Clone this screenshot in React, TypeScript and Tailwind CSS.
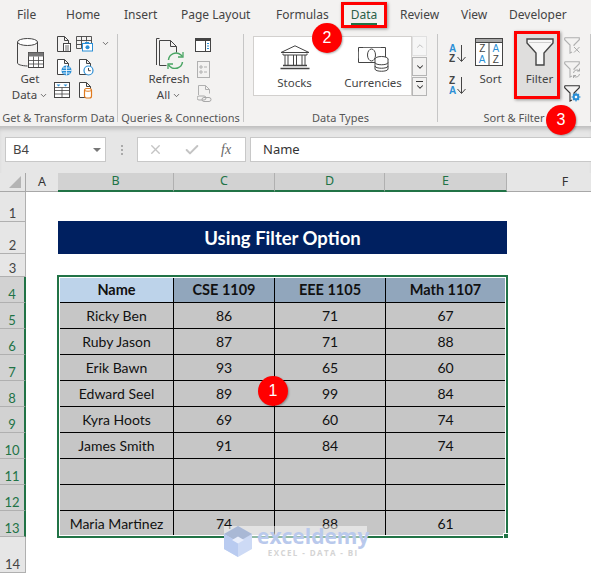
import { Check, ChevronDown, ChevronUp, X } from "lucide-react";

const tabs = [
  { t: "File", w: "w-[49px]" },
  { t: "Home", w: "w-[58px]" },
  { t: "Insert", w: "w-[57px]" },
  { t: "Page Layout", w: "w-[95px]" },
  { t: "Formulas", w: "w-[65px]" },
  { t: "Data", w: "" },
  { t: "Review", w: "w-[61px]" },
  { t: "View", w: "w-[48px]" },
  { t: "Developer", w: "w-[70px]" },
];

const rows = [
  ["Ricky Ben", "86", "71", "67"],
  ["Ruby Jason", "87", "71", "88"],
  ["Erik Bawn", "93", "65", "60"],
  ["Edward Seel", "89", "99", "84"],
  ["Kyra Hoots", "69", "60", "74"],
  ["James Smith", "91", "84", "74"],
  ["", "", "", ""],
  ["", "", "", ""],
  ["Maria Martinez", "74", "88", "61"],
];

const rowHeads = [
  { n: 1, h: "h-[30px]" },
  { n: 2, h: "h-[32px]" },
  { n: 3, h: "h-[23px]" },
  { n: 4, h: "h-[26px]", on: true },
  { n: 5, h: "h-[26px]", on: true },
  { n: 6, h: "h-[26px]", on: true },
  { n: 7, h: "h-[26px]", on: true },
  { n: 8, h: "h-[26px]", on: true },
  { n: 9, h: "h-[26px]", on: true },
  { n: 10, h: "h-[26px]", on: true },
  { n: 11, h: "h-[26px]", on: true },
  { n: 12, h: "h-[26px]", on: true },
  { n: 13, h: "h-[26px]", on: true },
  { n: 14, h: "h-[36px]" },
];

const colHeads = [
  { l: "A", w: "w-[32px]" },
  { l: "B", w: "w-[116px]", on: true },
  { l: "C", w: "w-[101px]", on: true },
  { l: "D", w: "w-[110px]", on: true },
  { l: "E", w: "w-[122px]", on: true },
  { l: "F", w: "w-[116px]" },
];

const cellW = ["w-[114px]", "w-[101px]", "w-[111px]", "w-[119px]"];

const ink = "#444";
const blue = "#2b8fd6";

function DocBase({ stroke = ink }: { stroke?: string }) {
  return <path d="M1.5.5h7l4 4v11h-11zM8.5.5v4h4" fill="#fff" stroke={stroke} />;
}

function GetDataIcon() {
  return (
    <svg width="28" height="31" viewBox="0 0 28 31" fill="none">
      <ellipse cx="10.5" cy="4" rx="10" ry="3.5" fill="#fff" stroke={ink} />
      <path d="M.5 4v21c0 1.5 4 2.8 10 3M20.5 4v10" stroke={ink} />
      <rect x="11.5" y="14.5" width="15" height="15" fill="#fff" stroke={ink} />
      <rect x="11.5" y="14.5" width="15" height="4" fill="#777" />
      <path d="M11.5 22.5h15M11.5 26h15M16.5 18.5v11M21.5 18.5v11" stroke={ink} strokeWidth=".8" />
    </svg>
  );
}

function DocLines() {
  return (
    <svg width="16" height="17" viewBox="0 0 16 17" fill="none">
      <path d="M1.5.5h7l4 4v11h-11zM8.5.5v4h4" stroke={ink} />
      <rect x="7.5" y="7.5" width="7" height="8" fill="#fff" stroke={ink} />
      <path d="M9 10h4M9 12h4M9 14h4" stroke={ink} strokeWidth=".8" />
    </svg>
  );
}

function CameraTable() {
  return (
    <svg width="17" height="16" viewBox="0 0 17 16" fill="none">
      <path d="M.5.5h15v9M.5.5v12h5M.5 4.5h15M.5 8.5h6M5.5.5v12M10.5.5v5" stroke={ink} strokeWidth=".9" />
      <rect x="6.5" y="7.5" width="10" height="7.5" fill="#fff" stroke={blue} />
      <rect x="9" y="6" width="4" height="2" fill={blue} />
      <circle cx="11.5" cy="11.2" r="2" fill={blue} />
    </svg>
  );
}

function DocGlobe() {
  return (
    <svg width="16" height="17" viewBox="0 0 16 17" fill="none">
      <DocBase />
      <circle cx="10.5" cy="11.5" r="5" fill={blue} />
      <path d="M5.5 11.5h10M10.5 6.5v10M7 9h7M7 14h7" stroke="#fff" strokeWidth=".8" />
    </svg>
  );
}

function DocClock() {
  return (
    <svg width="16" height="17" viewBox="0 0 16 17" fill="none">
      <DocBase />
      <circle cx="10.5" cy="11.5" r="4.5" fill="#fff" stroke={blue} strokeWidth="1.2" />
      <path d="M10.5 9v2.7h2.2" stroke={ink} />
    </svg>
  );
}

function TableArrows() {
  return (
    <svg width="16" height="16" viewBox="0 0 16 16" fill="none">
      <rect x=".5" y=".5" width="15" height="15" fill="#fff" stroke={ink} />
      <path d="M.5 5.5h15M.5 8.5h15M.5 12h15M8 5.5v10" stroke={ink} strokeWidth=".8" />
      <path d="M2.5 2.5h4l-2 2zM9.5 2.5h4l-2 2z" fill={blue} />
    </svg>
  );
}

function DocCylinder() {
  return (
    <svg width="16" height="17" viewBox="0 0 16 17" fill="none">
      <DocBase />
      <rect x="6.5" y="6.5" width="7" height="9.5" rx="2" fill="#fff" stroke="#e07b1f" strokeWidth="1.2" />
      <path d="M6.5 8.5c2 1 5 1 7 0" stroke="#e07b1f" />
    </svg>
  );
}

function RefreshIcon() {
  return (
    <svg width="28" height="31" viewBox="0 0 28 31" fill="none">
      <path d="M.5 27V.5h3" stroke={ink} />
      <path d="M3.5 27.5V2.5h11l6 6v6M3.5 27.5h7M14.5 2.5v6h6" fill="#f3f2f1" stroke={ink} />
      <path d="M12.5 22a7.5 7.5 0 0 1 12.5-5l1.5 1.5M26.5 24a7.5 7.5 0 0 1-12.5 4.5L12.5 27" stroke="#4aa564" strokeWidth="1.5" />
      <path d="M27 14v5h-5M12 31v-5h5" stroke="#4aa564" strokeWidth="1.3" />
    </svg>
  );
}

function PanelIcon() {
  return (
    <svg width="16" height="15" viewBox="0 0 16 15" fill="none">
      <rect x=".5" y=".5" width="15" height="13" fill="#fff" stroke={ink} />
      <rect x=".5" y=".5" width="15" height="2.5" fill={ink} />
      <path d="M10.5 3v10" stroke={ink} />
      <path d="M12 5.5h2M12 8h2M12 10.5h2" stroke={blue} strokeWidth="1.2" />
    </svg>
  );
}

function PropsIcon() {
  return (
    <svg width="13" height="17" viewBox="0 0 13 17" fill="none">
      <rect x=".5" y=".5" width="12" height="16" stroke="#b0b0b0" />
      <path d="M3 5h2v2H3zM3 10h2v2H3zM7 6h3M7 11h3" stroke="#b0b0b0" />
    </svg>
  );
}

function LinkDoc() {
  return (
    <svg width="15" height="17" viewBox="0 0 15 17" fill="none">
      <path d="M1.5 10V.5h7l4 4v4M8.5.5v4h4" stroke="#b0b0b0" />
      <path d="M2 11h5a2 2 0 0 1 0 4H2a2 2 0 0 1 0-4zM7 12.5h5a2 2 0 0 1 0 4H7a2 2 0 0 1 0-4z" stroke="#a8a8a8" />
    </svg>
  );
}

function BankIcon() {
  return (
    <svg width="30" height="25" viewBox="0 0 30 25" fill="none" stroke={ink}>
      <path d="M1 7.5 15 .8l14 6.7zM3 8.5V10h24V8.5" />
      <path d="M5 10v10M8 10v10M13.5 10v10M16.5 10v10M22 10v10M25 10v10" />
      <path d="M3 20.5h24M.5 23.5h29" strokeWidth="1.4" />
    </svg>
  );
}

function CurrencyIcon() {
  return (
    <svg width="31" height="26" viewBox="0 0 31 26" fill="none">
      <path d="M5 .5H.5v4M.5 11.5v4H5M23 .5h4.5v10M5 15.5h13" stroke={ink} />
      <path d="M5 .5h18M.5 4v8" stroke={ink} strokeWidth=".8" />
      <ellipse cx="13.5" cy="8" rx="4" ry="6" stroke={ink} />
      <ellipse cx="23.5" cy="12" rx="6.5" ry="2.5" fill="#fff" stroke={ink} />
      <path d="M17 12v10c0 3 13 3 13 0V12M17 15.5c0 3 13 3 13 0M17 19c0 3 13 3 13 0" fill="#fff" stroke={ink} />
    </svg>
  );
}

function SortArrow({ top, bottom }: { top: string; bottom: string }) {
  return (
    <svg width="18" height="19" viewBox="0 0 18 19" fill="none">
      <text x="0" y="8" fontSize="10" fontWeight="700" fontFamily="Liberation Sans, sans-serif" fill={top === "A" ? blue : ink}>
        {top}
      </text>
      <text x="0" y="17.5" fontSize="10" fontWeight="700" fontFamily="Liberation Sans, sans-serif" fill={bottom === "A" ? blue : ink}>
        {bottom}
      </text>
      <path d="M12.5 1v16M8.5 13l4 4.5 4-4.5" stroke={ink} />
    </svg>
  );
}

function SortIcon() {
  return (
    <svg width="28" height="28" viewBox="0 0 28 28" fill="none">
      <rect x=".5" y=".5" width="27" height="27" fill="#fff" stroke={ink} />
      <rect x=".5" y=".5" width="27" height="4" fill="#a8a8a8" stroke={ink} />
      <path d="M14 4.5v23" stroke={ink} />
      <g fontSize="10" fontFamily="Liberation Sans, sans-serif" textAnchor="middle">
        <text x="7.2" y="14" fill={ink}>Z</text>
        <text x="7.2" y="25" fill={blue}>A</text>
        <text x="20.8" y="14" fill={blue}>A</text>
        <text x="20.8" y="25" fill={ink}>Z</text>
      </g>
    </svg>
  );
}

function FunnelIcon() {
  return (
    <svg width="28" height="28" viewBox="0 0 28 28" fill="none">
      <path d="M1 1h26v4L18 15v12h-8V15L1 5z" fill="#f7f7f7" stroke={ink} strokeWidth="1.4" />
      <path d="M3 4.5h22" stroke="#cfcfcf" />
    </svg>
  );
}

function SmallFunnel({ kind }: { kind: "clear" | "reapply" | "advanced" }) {
  const c = kind === "advanced" ? "#333" : "#b0b0b0";
  return (
    <svg width="17" height="17" viewBox="0 0 17 17" fill="none">
      <path d="M.7.7h14.6v2L10 8v1M.7.7v2L6 8v8l2-1" stroke={c} strokeWidth="1.1" />
      {kind === "clear" && <path d="M10 10l5.5 5.5M15.5 10 10 15.5" stroke="#a9a9a9" />}
      {kind === "reapply" && <path d="M9.5 12a3.5 3.5 0 0 1 6-2M15.5 13a3.5 3.5 0 0 1-6 2M15.5 7.5V10H13M9.500 17v-2.500H12" stroke="#a9a9a9" />}
      {kind === "advanced" && (
        <g stroke={blue}>
          <circle cx="12" cy="12" r="2.6" strokeWidth="1.6" />
          <path d="M12 7.5v9M7.5 12h9M9 9l6 6M15 9l-6 6" strokeWidth="1.1" />
          <circle cx="12" cy="12" r="1.2" fill="#fff" stroke="none" />
        </g>
      )}
    </svg>
  );
}

function Caret() {
  return <ChevronDown size={9} strokeWidth={2} className="text-[#444]" />;
}

function Badge({ n, pos }: { n: number; pos: string }) {
  return (
    <div className={`absolute ${pos} flex h-[30px] w-[30px] items-center justify-center rounded-full bg-[#ff0000] text-[16px] text-white shadow-[1px_1px_2px_rgba(0,0,0,0.3)] font-['Liberation_Sans',sans-serif]`}>
      {n}
    </div>
  );
}

function Divider() {
  return <div className="my-1 w-px shrink-0 bg-[#c6c6c6]" />;
}

function Group({ w, label, children }: { w: string; label: string; children: React.ReactNode }) {
  return (
    <div className={`flex h-full shrink-0 flex-col pt-[6px] ${w}`}>
      <div className="flex h-[74px]">{children}</div>
      <div className="h-4 whitespace-nowrap text-center text-[11px] leading-4 text-[#555]">{label}</div>
    </div>
  );
}

function Ribbon() {
  return (
    <div className="flex h-[96px] bg-[#f3f2f1] text-[11.5px] leading-4 text-[#444]">
      <Group w="w-[117px]" label="Get & Transform Data">
        <div className="ml-[8px] flex w-[44px] flex-col items-center pt-[2px]">
          <div className="-mr-[2px]"><GetDataIcon /></div>
          <div className="mt-[2px]">Get</div>
          <div className="flex items-center gap-[2px]">Data <Caret /></div>
        </div>
        <div className="ml-[2px] grid grid-cols-[22px_22px_14px] grid-rows-[23px_23px_23px]">
          <div className="pl-[2px]"><DocLines /></div>
          <div className="pl-0"><CameraTable /></div>
          <div className="pt-[3px] pl-[3px]"><Caret /></div>
          <div className="pl-[2px]"><DocGlobe /></div>
          <div className="pl-[2px]"><DocClock /></div>
          <div />
          <div><TableArrows /></div>
          <div className="pl-[2px]"><DocCylinder /></div>
          <div />
        </div>
      </Group>
      <Divider />
      <Group w="w-[125px]" label="Queries & Connections">
        <div className="ml-[26px] flex w-[50px] flex-col items-center pt-[2px]">
          <div className="ml-[2px]"><RefreshIcon /></div>
          <div className="mt-[2px]">Refresh</div>
          <div className="flex items-center gap-[2px]">All <Caret /></div>
        </div>
        <div className="ml-[1px] flex flex-col gap-[7px] pt-[2px]">
          <PanelIcon />
          <div className="mt-px pl-[2px]"><PropsIcon /></div>
          <div className="pl-[2px]"><LinkDoc /></div>
        </div>
      </Group>
      <Divider />
      <Group w="w-[193px]" label="Data Types">
        <div className="ml-[9px] flex h-[60px] w-[174px]">
          <div className="flex h-[60px] w-[159px] border border-[#d2d0ce] bg-white">
            <div className="flex w-[81px] flex-col items-center justify-end pb-[4px]">
              <BankIcon />
              <div className="mt-[5px]">Stocks</div>
            </div>
            <div className="flex w-[76px] flex-col items-center justify-end pb-[4px]">
              <CurrencyIcon />
              <div className="mt-[2px]">Currencies</div>
            </div>
          </div>
          <div className="flex w-[15px] flex-col gap-px">
            <div className="flex h-[20px] items-center justify-center border border-[#e0e0e0] bg-[#f6f6f6] text-[#b5b5b5]"><ChevronUp size={10} /></div>
            <div className="flex h-[19px] items-center justify-center border border-[#b5b5b5] text-[#333]"><ChevronDown size={10} strokeWidth={2.5} /></div>
            <div className="flex h-[19px] flex-col items-center justify-center border border-[#b5b5b5] text-[#333]">
              <div className="h-px w-[7px] bg-[#333]" />
              <ChevronDown size={10} strokeWidth={2.5} />
            </div>
          </div>
        </div>
      </Group>
      <Divider />
      <Group w="w-[152px]" label="Sort & Filter">
        <div className="ml-[11px] flex w-[18px] flex-col gap-[13px] pt-[8px]">
          <SortArrow top="A" bottom="Z" />
          <SortArrow top="Z" bottom="A" />
        </div>
        <div className="ml-[2px] flex w-[40px] flex-col items-center pt-[2px]">
          <SortIcon />
          <div className="ml-[3px] mt-[5px]">Sort</div>
        </div>
        <div className="ml-[5px] -mt-[5px] flex h-[68px] w-[46px] flex-col items-center border-[3px] border-[#ff0000] bg-[#dfdedd] pl-[5px] pt-[4px] shadow-[1px_1px_3px_rgba(0,0,0,0.4)]">
          <FunnelIcon />
          <div className="mt-[5px]">Filter</div>
        </div>
        <div className="ml-[4px] flex flex-col gap-[7px] pt-[1px]">
          <SmallFunnel kind="clear" />
          <SmallFunnel kind="reapply" />
          <SmallFunnel kind="advanced" />
        </div>
      </Group>
      <Divider />
    </div>
  );
}

function FormulaBar() {
  return (
    <div className="h-[47px] bg-[#e6e6e6] pt-[11px] shadow-[inset_0_5px_4px_-2px_rgba(0,0,0,0.18)]">
      <div className="flex h-[25px] text-[13px] text-[#444]">
        <div className="ml-[5px] flex w-[101px] items-center justify-between border border-[#c8c8c8] bg-white pl-[7px] pr-[4px] pt-px">
          B4
          <div className="h-0 w-0 border-x-[4px] border-t-[4px] border-x-transparent border-t-[#777]" />
        </div>
        <div className="ml-[15px] flex w-[2px] flex-col items-center justify-center gap-[2px]">
          <div className="h-[2px] w-[2px] bg-[#aaa]" />
          <div className="h-[2px] w-[2px] bg-[#aaa]" />
          <div className="h-[2px] w-[2px] bg-[#aaa]" />
        </div>
        <div className="ml-[14px] flex w-[109px] items-center border border-[#c8c8c8] bg-white pl-[10px]">
          <X size={15} strokeWidth={2.2} className="text-[#c4c4c4]" />
          <Check size={16} strokeWidth={3} className="ml-[21px] text-[#c4c4c4]" />
          <span className="ml-[21px] text-[14px] italic text-[#666] font-['Liberation_Serif',serif]">fx</span>
        </div>
        <div className="ml-[4px] flex flex-1 items-center border-y border-l border-[#c8c8c8] bg-white pl-[12px] pt-px text-[#333]">Name</div>
      </div>
    </div>
  );
}

function ColumnHeaders() {
  return (
    <div className="flex h-[19px] bg-[#e6e6e6] text-[12.5px] leading-none">
      <div className="flex w-[26px] shrink-0 items-end justify-end border-r border-b border-[#a8a8a8] pr-[4px] pb-[3px]">
        <div className="h-0 w-0 border-b-[12px] border-l-[12px] border-b-[#b4b4b4] border-l-transparent" />
      </div>
      {colHeads.map((c) => (
        <div
          key={c.l}
          className={`flex shrink-0 items-center justify-center ${c.w} ${
            c.on
              ? "border-r border-b-2 border-r-[#b0b0b0] border-b-[#217346] bg-[#d2d2d2] text-[#217346]"
              : "border-b border-[#a8a8a8] text-[#333]"
          }`}
        >
          {c.l}
        </div>
      ))}
    </div>
  );
}

function RowHeaders() {
  return (
    <div className="w-[26px] shrink-0 text-[13px]">
      {rowHeads.map((r) => (
        <div
          key={r.n}
          className={`flex items-end justify-center leading-4 ${r.h} ${
            r.on
              ? "border-r-2 border-b border-r-[#217346] border-b-[#b0b0b0] bg-[#d2d2d2] text-[#217346]"
              : "border-r border-b border-[#b0b0b0] bg-[#e6e6e6] text-[#444]"
          }`}
        >
          {r.n}
        </div>
      ))}
    </div>
  );
}

function DataTable() {
  const heads = ["Name", "CSE 1109", "EEE 1105", "Math 1107"];
  return (
    <div className="relative ml-[-1px] mt-[21px] h-[263px] w-[451px] border-2 border-[#217346]">
      <div className="border border-white text-[14px] text-[#111]">
        <div className="flex h-[25px] border-b border-black text-[14.5px] font-bold">
          {heads.map((h, i) => (
            <div
              key={h}
              className={`flex items-center justify-center ${cellW[i]} ${i === 0 ? "bg-[#bdd3ea]" : "bg-[#91a6bc]"} ${i < 3 ? "border-r border-black" : ""}`}
            >
              {h}
            </div>
          ))}
        </div>
        {rows.map((row, r) => (
          <div key={r} className={`flex ${r === 8 ? "h-[24px]" : "h-[26px] border-b border-black"}`}>
            {row.map((v, i) => (
              <div
                key={i}
                className={`flex items-center justify-center bg-[#c6c6c6] ${cellW[i]} ${i < 3 ? "border-r border-black" : ""}`}
              >
                {v}
              </div>
            ))}
          </div>
        ))}
      </div>
      <div className="absolute bottom-[-3px] right-[-3px] h-[6px] w-[6px] border border-white bg-[#217346]" />
    </div>
  );
}

function Watermark() {
  return (
    <div className="absolute left-[224px] top-[526px] flex h-[31px] w-[143px] bg-white/50">
      <svg width="28" height="31" viewBox="0 0 28 31" className="shrink-0">
        <path d="M14 0 28 8v15l-14 8-14-8V8z" fill="#cddaf5" />
        <path d="M14 0 28 8 14 16 0 8z" fill="#9aa9c8" fillOpacity=".7" />
        <path d="M14 16v15L0 23V8z" fill="#b9cbf0" />
        <path d="M8 14l6-3.5 6 3.5-6 3.5z" fill="#e9eefb" />
      </svg>
      <div className="ml-[5px] flex flex-col items-center">
        <div className="text-[21px] font-bold leading-[21px] text-[#b9c9ec] font-['Open_Sans',sans-serif]">exceldemy</div>
        <div className="mt-[1px] text-[8px] font-bold leading-[10px] tracking-[1.4px] text-[#d4d4d4] font-['Open_Sans',sans-serif]">EXCEL - DATA - BI</div>
      </div>
    </div>
  );
}

export default function App() {
  return (
    <div className="relative h-[573px] w-[591px] overflow-hidden bg-white font-['Noto_Sans',sans-serif]">
      <div className="flex h-[30px] items-center bg-[#f3f2f1] pl-[17px] text-[12px] text-[#444]">
        {tabs.map(({ t, w }) =>
          t === "Data" ? (
            <div key={t} className="relative mr-[13px] flex h-[26px] w-[46px] items-center justify-center border-[3px] border-[#ff0000] text-[#2a6048] shadow-[1px_1px_3px_rgba(0,0,0,0.4)]">
              {t}
              <div className="absolute bottom-0 left-[7px] right-[7px] h-[2px] bg-[#217346]" />
            </div>
          ) : (
            <div key={t} className={`shrink-0 whitespace-nowrap ${w}`}>{t}</div>
          )
        )}
      </div>
      <Ribbon />
      <FormulaBar />
      <ColumnHeaders />
      <div className="flex font-['Lato',sans-serif]">
        <RowHeaders />
        <div className="flex-1 pl-[32px] pt-[29px]">
          <div className="flex h-[33px] w-[449px] items-center justify-center bg-[#002060] pt-[3px] text-[18.5px] font-bold text-white">
            Using Filter Option
          </div>
          <DataTable />
        </div>
      </div>
      <Badge n={2} pos="left-[312px] top-[23px]" />
      <Badge n={3} pos="left-[546px] top-[105px]" />
      <Badge n={1} pos="left-[258px] top-[376px]" />
      <Watermark />
    </div>
  );
}
